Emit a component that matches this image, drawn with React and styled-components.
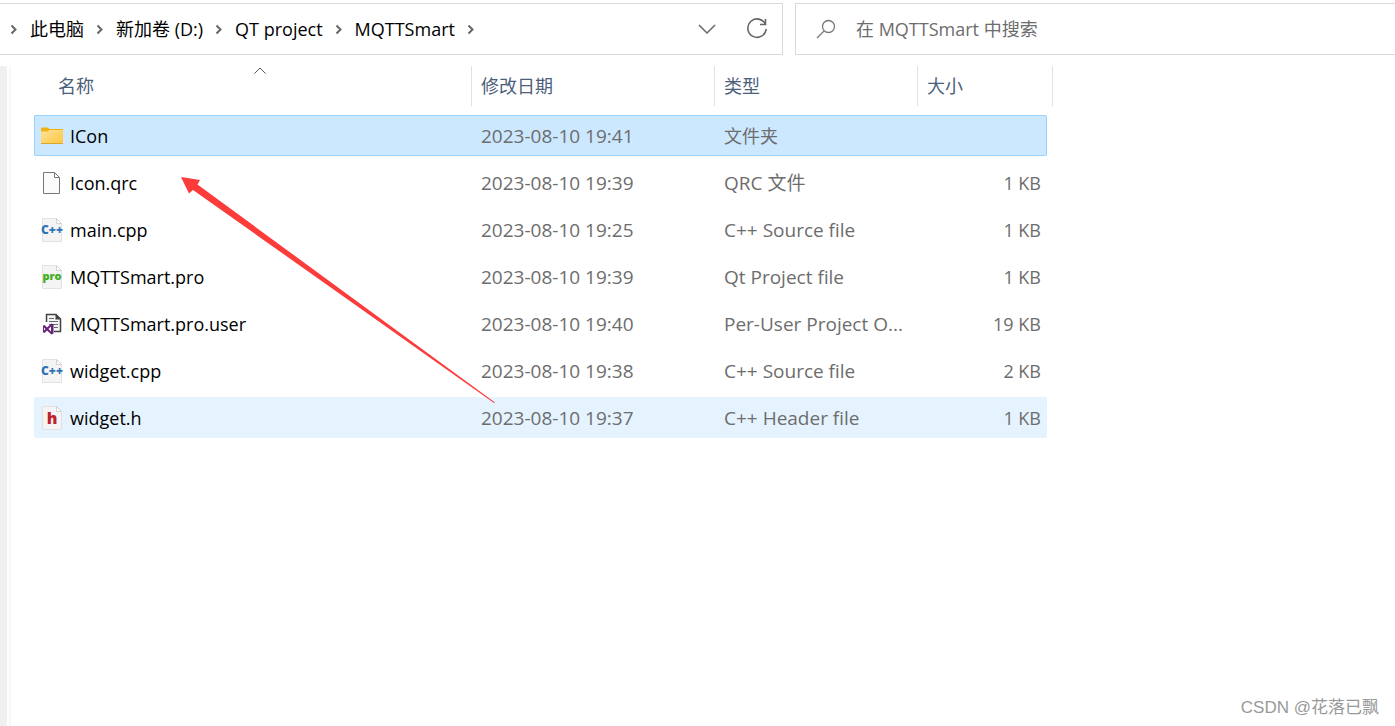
import React, { useState } from "react";
import styled, { createGlobalStyle } from "styled-components";

const crumbs = ["此电脑", "新加卷 (D:)", "QT project", "MQTTSmart"];

const files = [
  { name: "ICon", date: "2023-08-10 19:41", type: "文件夹", size: "", icon: "folder" },
  { name: "Icon.qrc", date: "2023-08-10 19:39", type: "QRC 文件", size: "1 KB", icon: "blank" },
  { name: "main.cpp", date: "2023-08-10 19:25", type: "C++ Source file", size: "1 KB", icon: "cpp" },
  { name: "MQTTSmart.pro", date: "2023-08-10 19:39", type: "Qt Project file", size: "1 KB", icon: "pro" },
  { name: "MQTTSmart.pro.user", date: "2023-08-10 19:40", type: "Per-User Project O...", size: "19 KB", icon: "user" },
  { name: "widget.cpp", date: "2023-08-10 19:38", type: "C++ Source file", size: "2 KB", icon: "cpp" },
  { name: "widget.h", date: "2023-08-10 19:37", type: "C++ Header file", size: "1 KB", icon: "header" },
];

function FolderIcon() {
  return (
    <svg width="24" height="24" viewBox="0 0 24 24">
      <defs>
        <linearGradient id="folder" x1="0" y1="0" x2="1" y2="1">
          <stop offset="0" stopColor="#ffe39a" />
          <stop offset="1" stopColor="#fcc63e" />
        </linearGradient>
      </defs>
      <path d="M1 4.5q0-1 1-1h6l1.5 1.5H22q1 0 1 1V8H1z" fill="#f0b211" />
      <path d="M1 7.5h7L9.500 6H23v14H1z" fill="url(#folder)" />
      <path d="M1 19.500h22" stroke="#dba72e" />
    </svg>
  );
}

function BlankIcon() {
  return (
    <svg width="24" height="24" viewBox="0 0 24 24">
      <path d="M3.500 1.500h11l5 5v16h-16z" fill="#fbfbfb" stroke="#777" />
      <path d="M14.500 1.500v5h5" fill="none" stroke="#777" />
    </svg>
  );
}

function LabelIcon({ label, color, y, size }) {
  return (
    <svg width="24" height="24" viewBox="0 0 24 24">
      <path d="M2.500.5h14l5 5v18h-19z" fill="#f4f4f5" stroke="#e2e2e4" />
      <path d="M16.500.5v5h5z" fill="#fff" stroke="#d2d2d4" />
      <IconLabel x="12" y={y} textAnchor="middle" fill={color} fontSize={size}>
        {label}
      </IconLabel>
    </svg>
  );
}

function UserIcon() {
  return (
    <svg width="24" height="24" viewBox="0 0 24 24">
      <path d="M6.500 10V2.500h9.500l4.500 4.500v12.500H14" fill="#f5f5f5" stroke="#424242" strokeWidth="1.500" />
      <path d="M15.500 2v5.500h5.500z" fill="#424242" />
      <path d="M9 6.500h5M9 9.500h9M9 12.500h9M14 15.500h4" stroke="#6b6b6b" />
      <path
        d="M11.500 11.500l2 1v9l-2 1-4.500-4-2.500 2.500-1.500-.8v-6.400l1.500-.8 2.500 2.500zM11 14.500l-2.500 2.500 2.500 2.500zM4 15.500v3l1.500-1.500z"
        fill="#68217a"
        fillRule="evenodd"
      />
    </svg>
  );
}

const icons = {
  folder: <FolderIcon />,
  blank: <BlankIcon />,
  cpp: <LabelIcon label="C++" color="#2f73b7" y={16} size={12} />,
  pro: <LabelIcon label="pro" color="#41ad21" y={15} size={11} />,
  user: <UserIcon />,
  header: <LabelIcon label="h" color="#bd2328" y={18} size={16} />,
};

function Crumb({ label }) {
  return (
    <>
      <CrumbArrow />
      <CrumbButton>{label}</CrumbButton>
    </>
  );
}

function CrumbArrow() {
  return (
    <svg width="8" height="12" viewBox="0 0 8 12" fill="none" stroke="#666" strokeWidth="2">
      <path d="M1.500 2.500L5.500 6.500L1.500 10.500" />
    </svg>
  );
}

function App() {
  const [query, setQuery] = useState("");
  const [selected, setSelected] = useState("ICon");

  return (
    <Page>
      <GlobalStyle />
      <TopBar>
        <AddressBar aria-label="路径">
          {crumbs.map((label) => (
            <Crumb key={label} label={label} />
          ))}
          <CrumbArrow />
          <Spacer />
          <IconButton aria-label="展开">
            <svg width="20" height="12" viewBox="0 0 20 12" fill="none" stroke="#666" strokeWidth="1.500">
              <path d="M2 2l8 8 8-8" />
            </svg>
          </IconButton>
          <IconButton aria-label="刷新">
            <svg width="22" height="22" viewBox="0 0 22 22" fill="none" stroke="#666" strokeWidth="1.600">
              <path d="M19.500 6.500A9.200 9.200 0 1 0 20.200 11" />
              <path d="M19.500 1v5.500h-5.500" />
            </svg>
          </IconButton>
        </AddressBar>
        <SearchBar>
          <svg width="20" height="20" viewBox="0 0 20 20" fill="none" stroke="#777" strokeWidth="1.300">
            <circle cx="12.500" cy="7.500" r="6" />
            <path d="M8 12L1 19" />
          </svg>
          <SearchInput
            aria-label="搜索"
            placeholder="在 MQTTSmart 中搜索"
            value={query}
            onChange={(e) => setQuery(e.target.value)}
          />
        </SearchBar>
      </TopBar>
      <Content>
        <Splitter />
        <FileTable>
          <colgroup>
            <Col $width={438} />
            <Col $width={243} />
            <Col $width={203} />
            <Col $width={129} />
            <Col $width={6} />
          </colgroup>
          <thead>
            <tr>
              <HeadCell>
                <SortButton $first>
                  名称
                  <SortMark width="12" height="7" viewBox="0 0 12 7" fill="none" stroke="#555">
                    <path d="M.5 6.500L6 1l5.500 5.500" />
                  </SortMark>
                </SortButton>
              </HeadCell>
              <HeadCell>
                <SortButton>修改日期</SortButton>
              </HeadCell>
              <HeadCell>
                <SortButton>类型</SortButton>
              </HeadCell>
              <HeadCell colSpan={2}>
                <SortButton>大小</SortButton>
              </HeadCell>
            </tr>
          </thead>
          <tbody>
            {files.map((file) => (
              <Row
                key={file.name}
                $selected={file.name === selected}
                $hover={file.name === "widget.h"}
                onClick={() => setSelected(file.name)}
              >
                <Cell>
                  <FileName>
                    {icons[file.icon]}
                    {file.name}
                  </FileName>
                </Cell>
                <Cell $large>{file.date}</Cell>
                <Cell $large={file.icon !== "folder"}>{file.type}</Cell>
                <Cell $right>{file.size}</Cell>
              </Row>
            ))}
          </tbody>
        </FileTable>
        <Pointer width="320" height="232" viewBox="0 0 320 232">
          <path d="M1 1L20 4L17.500 8.500L315 226.500L314 227L13 14L9 17.500z" fill="#fc3b3b" />
        </Pointer>
      </Content>
      <Watermark>CSDN @花落已飘</Watermark>
    </Page>
  );
}

const GlobalStyle = createGlobalStyle`
  * {
    box-sizing: border-box;
  }
  body {
    margin: 0;
    background: #fff;
    color: #000;
    font-family: "Open Sans", "Noto Sans CJK SC", sans-serif;
    font-size: 18px;
    line-height: 24px;
  }
  button,
  input {
    border: 0;
    padding: 0;
    background: none;
    color: inherit;
    font: inherit;
  }
  svg {
    flex-shrink: 0;
  }
`;
const Page = styled.div`
  position: relative;
  display: flex;
  flex-direction: column;
  min-height: 100vh;
  overflow: hidden;
`;
const TopBar = styled.header`
  display: grid;
  grid-template-columns: 783fr 600fr;
  gap: 12px;
  padding-top: 3px;
`;
const AddressBar = styled.nav`
  display: flex;
  align-items: center;
  gap: 12px;
  height: 52px;
  padding: 0 13px 0 10px;
  border: 1px solid #d9d9d9;
  border-left: 0;
`;
const CrumbButton = styled.button`
  white-space: nowrap;
`;
const Spacer = styled.div`
  flex: 1;
`;
const IconButton = styled.button`
  display: flex;
  align-items: center;
  justify-content: center;
  width: 24px;
  height: 24px;
  margin-left: 14px;
`;
const SearchBar = styled.label`
  display: flex;
  align-items: center;
  gap: 20px;
  height: 52px;
  padding-left: 20px;
  border: 1px solid #d9d9d9;
  border-right: 0;
`;
const SearchInput = styled.input`
  flex: 1;
  min-width: 0;
  outline: none;
  &::placeholder {
    color: #6d6d6d;
    opacity: 1;
  }
`;
const Content = styled.main`
  position: relative;
  flex: 1;
  display: flex;
  align-items: flex-start;
  gap: 23px;
  padding-top: 11px;
`;
const Splitter = styled.div`
  align-self: stretch;
  width: 11px;
  border-left: 7px solid #f0f0f0;
  border-right: 2px solid #f7f7f7;
`;
const FileTable = styled.table`
  table-layout: fixed;
  width: 1019px;
  border-spacing: 0 6px;
  margin-top: -6px;
`;
const Col = styled.col`
  width: ${(props) => props.$width}px;
`;
const HeadCell = styled.th`
  height: 43px;
  padding: 0;
  vertical-align: top;
  font-weight: 400;
  color: #4c607a;
`;
const SortButton = styled.button`
  position: relative;
  display: block;
  width: ${(props) => (props.$first ? "calc(100% - 14px)" : "100%")};
  height: 40px;
  margin-left: ${(props) => (props.$first ? "14px" : 0)};
  padding-left: ${(props) => (props.$first ? "10px" : "9px")};
  border-right: 1px solid #e2e2e2;
  text-align: left;
`;
const SortMark = styled.svg`
  position: absolute;
  top: 1px;
  left: calc(50% - 6px);
`;
const Cell = styled.td`
  height: 41px;
  padding: 0 ${(props) => (props.$right ? "5px" : "9px")};
  border: 1px solid transparent;
  border-width: 1px 0;
  color: #6d6d6d;
  font-size: ${(props) => (props.$large ? "19px" : "18px")};
  white-space: nowrap;
  text-align: ${(props) => (props.$right ? "right" : "left")};
  &:first-child {
    padding-left: 5px;
    border-left-width: 1px;
    border-radius: 2px 0 0 2px;
  }
  &:last-child {
    border-right-width: 1px;
    border-radius: 0 2px 2px 0;
  }
`;
const Row = styled.tr`
  ${Cell} {
    background: ${(props) => (props.$selected ? "#cce8ff" : props.$hover ? "#e5f3ff" : "none")};
    border-color: ${(props) => (props.$selected ? "#99d1ff" : "transparent")};
  }
`;
const FileName = styled.span`
  display: flex;
  align-items: center;
  gap: 6px;
  color: #000;
`;
const IconLabel = styled.text`
  font-family: "Open Sans", sans-serif;
  font-weight: 800;
`;
const Pointer = styled.svg`
  position: absolute;
  top: 121px;
  left: 180px;
  pointer-events: none;
`;
const Watermark = styled.div`
  position: absolute;
  right: 16px;
  bottom: 6px;
  color: #999;
  font-family: "Liberation Sans", "Noto Sans CJK SC", sans-serif;
  font-size: 17px;
`;

export default App;
